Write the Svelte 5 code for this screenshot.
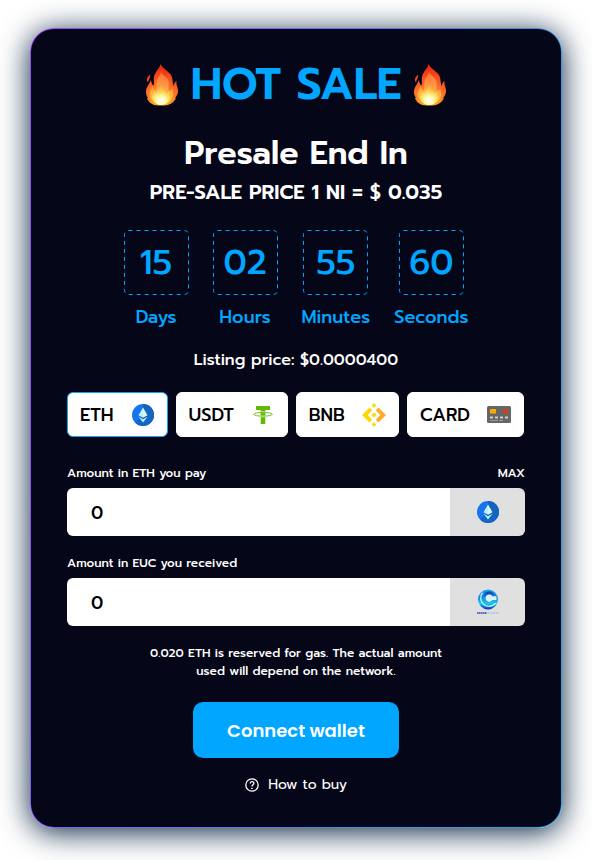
<script>
  const countdown = [
    { value: '15', label: 'Days' },
    { value: '02', label: 'Hours' },
    { value: '55', label: 'Minutes' },
    { value: '60', label: 'Seconds' }
  ];
  const methods = ['ETH', 'USDT', 'BNB', 'CARD'];
  let selected = $state('ETH');
  let pay = $state('0');
  let receive = $state('0');
</script>

{#snippet flame(id)}
  <svg class="flame" viewBox="0 0 34 42" aria-hidden="true">
    <defs>
      <radialGradient id="{id}-outer" cx="16" cy="37" r="34" gradientUnits="userSpaceOnUse">
        <stop offset="0" stop-color="#ffd21c" />
        <stop offset=".4" stop-color="#ff7d2b" />
        <stop offset=".72" stop-color="#f74b20" />
        <stop offset="1" stop-color="#e62b12" />
      </radialGradient>
      <linearGradient id="{id}-mid" x1="16" y1="6" x2="16" y2="38" gradientUnits="userSpaceOnUse">
        <stop offset="0" stop-color="#ff7a3d" />
        <stop offset=".5" stop-color="#ffa24a" />
        <stop offset="1" stop-color="#ffdc35" />
      </linearGradient>
      <radialGradient id="{id}-core" cx="16" cy="37" r="15" gradientUnits="userSpaceOnUse">
        <stop offset="0" stop-color="#ffffff" />
        <stop offset=".3" stop-color="#fffbb0" />
        <stop offset="1" stop-color="#ffd42a" stop-opacity="0.2" />
      </radialGradient>
    </defs>
    <path fill="url(#{id}-outer)" d="M15.5 0C15 4 10 7.500 9 13c-.5 3 .3 6-.4 8.500C7 21 6.500 17.500 5.500 16 5 20 1.500 22 1 27c-.2 3 .6 5 2 7L2 34c1 4 5.500 7.500 11.500 7.500h6c6-.5 10-3.500 11.500-7.500l-1 .3c2-2.300 3.500-5.500 3-8.500-.3-3-2-5-1.500-9-2 1.500-2.300 3.500-3 5.500C27.500 19 28 16 26.500 12 25 8 18.500 5.500 15.500 0Z" />
    <path fill="#f0471f" d="M5 10.500C4 12 1.500 13.500 2 16.500c.1 1 .6 1.500 1.200 1.500.2-2.500 2.500-4 1.800-7.500Z" />
    <path fill="url(#{id}-mid)" opacity=".8" d="M16 8c-.5 4-4 6-4.500 10-.3 3 .5 6-.8 8C9 26 8 24 7 22.500 6.500 26 4 28 5 32c1.500 5 6 8 11.500 8S27 37 28 32c.6-3-.5-5-.7-7.500-1 1.500-1.800 2.500-3.300 2.500-1.500-3 .5-6-.5-10C22.500 13 17.500 12 16 8Z" />
    <path fill="url(#{id}-core)" d="M15.500 21c-1 4-3.500 5-4.500 8-1-.5-1.500-1.500-2-2.500-.5 3-2.500 4.500-1.500 8C8.500 38.500 12 41 16 41s8-2 9-6.500c.6-3-1-4.500-1-7.500-1 1-1.500 2-2.500 2.500C21 25.500 17 25 15.500 21Z" />
  </svg>
{/snippet}

{#snippet ethIcon()}
  <svg width="22" height="22" viewBox="0 0 22 22" aria-hidden="true">
    <circle cx="11" cy="11" r="11" fill="#1675ec" />
    <path d="M11 0a11 11 0 0 1 7.800 18.800L11 11Z" fill="#1565bd" />
    <path d="M18.800 18.800A11 11 0 0 1 3.200 18.800L11 11Z" fill="#1565c8" />
    <path d="M11 3.500 6.500 11.200 11 13.800Z" fill="#b9f1ff" />
    <path d="M11 3.500v10.300l4.500-2.600Z" fill="#d5f5f7" />
    <path d="M6.500 12.700 11 15.300l4.500-2.600L11 18.600Z" fill="#b9f1f4" />
  </svg>
{/snippet}

{#snippet methodIcon(name)}
  {#if name === 'ETH'}
    {@render ethIcon()}
  {:else if name === 'USDT'}
    <svg width="20" height="18" viewBox="0 0 20 18" aria-hidden="true">
      <path d="M3 0h14v4h-4.700v14H7.700V4H3Z" fill="#61b900" />
      <ellipse cx="10" cy="8.300" rx="9.300" ry="1.900" fill="none" stroke="#fff" stroke-width="1.900" />
      <ellipse cx="10" cy="8.300" rx="9.300" ry="1.900" fill="none" stroke="#72bf1c" stroke-width="1" />
      <path d="M7.700 7.200h4.600v2.200H7.700z" fill="#61b900" />
    </svg>
  {:else if name === 'BNB'}
    <svg width="24" height="24" viewBox="0 0 24 24" aria-hidden="true">
      <path d="M7.500 4.500 10.200 7.200 5.800 12l4.400 4.800-2.700 2.700L0 12Z" fill="#ffd600" />
      <path d="M16.500 4.500 13.800 7.200l4.400 4.800-4.400 4.800 2.700 2.700L24 12Z" fill="#ffab30" />
      <path d="M12 0 9.500 2.500 12 5Zm0 9.200L9.200 12l2.800 2.800Zm0 9.800-2.500 2.500L12 24Z" fill="#fbdf24" />
      <path d="m12 0 2.500 2.500L12 5Zm0 9.200 2.800 2.800-2.800 2.800Zm0 9.800 2.500 2.500L12 24Z" fill="#dfe823" />
    </svg>
  {:else}
    <svg width="24" height="17" viewBox="0 0 24 17" aria-hidden="true">
      <rect width="24" height="17" rx="1.500" fill="#666" />
      <rect x="3" y="3" width="6" height="4.500" rx=".5" fill="#ffb300" />
      <path d="M5 3v3h4" fill="none" stroke="#db8509" stroke-width=".5" />
      <circle cx="18.500" cy="5.300" r="2.500" fill="#e03c14" />
      <path d="M3 11.500h3m2 0h3m2 0h3m2 0h3" stroke="#d0d0d0" stroke-width="2" />
      <path d="M3 14.500h8m1 0h4" stroke="#aaa" stroke-width=".8" />
    </svg>
  {/if}
{/snippet}

<main>
  <section class="card">
    <h1>{@render flame('left')}<span>HOT SALE</span>{@render flame('right')}</h1>
    <h2>Presale End In</h2>
    <p class="price">PRE-SALE PRICE 1 NI = $ 0.035</p>

    <div class="countdown">
      {#each countdown as unit}
        <div class="unit">
          <div class="box">
            <svg class="outline" aria-hidden="true">
              <rect class="dashes" x="0.5" y="0.5" rx="4" />
            </svg>
            <span>{unit.value}</span>
          </div>
          <span class="unit-label">{unit.label}</span>
        </div>
      {/each}
    </div>

    <p class="listing">Listing price: $0.0000400</p>

    <div class="methods">
      {#each methods as name}
        <button
          type="button"
          class="method"
          class:active={selected === name}
          aria-pressed={selected === name}
          onclick={() => (selected = name)}
        >
          <span>{name}</span>
          <span class="method-icon">{@render methodIcon(name)}</span>
        </button>
      {/each}
    </div>

    <div class="field">
      <div class="field-head">
        <label for="pay">Amount in ETH you pay</label>
        <button type="button" class="max">MAX</button>
      </div>
      <div class="control">
        <input id="pay" type="text" inputmode="decimal" bind:value={pay} />
        <div class="token">{@render ethIcon()}</div>
      </div>
    </div>

    <div class="field">
      <div class="field-head">
        <label for="receive">Amount in EUC you received</label>
      </div>
      <div class="control">
        <input id="receive" type="text" inputmode="decimal" bind:value={receive} />
        <div class="token">
          <svg width="24" height="26" viewBox="0 0 24 26" aria-hidden="true">
            <defs>
              <linearGradient id="coin" x1="0" y1="0" x2="0" y2="1">
                <stop offset="0" stop-color="#1aa5e4" />
                <stop offset=".4" stop-color="#1a7fdc" />
                <stop offset=".7" stop-color="#16d0ea" />
                <stop offset="1" stop-color="#1521b0" />
              </linearGradient>
              <linearGradient id="ring" x1="0" y1="0" x2="0" y2="1">
                <stop offset="0" stop-color="#1431b8" />
                <stop offset=".5" stop-color="#149ce0" />
                <stop offset="1" stop-color="#22c7ee" />
              </linearGradient>
            </defs>
            <circle cx="12" cy="10.500" r="10" fill="url(#coin)" />
            <path d="M6.500 3.800a8.300 8.300 0 0 0 13 10.400" fill="none" stroke="#b5f3fa" stroke-width="1.400" />
            <circle cx="13" cy="9" r="6.500" fill="url(#ring)" />
            <path d="M20.500 7.300h-4.200a3.600 3.600 0 1 0 0 3.600h4.200" fill="#e0f1f5" />
            <path d="M1 24h10" stroke="#2848b8" stroke-width="1.600" stroke-dasharray="1.500 .4" />
            <path d="M11.500 24H23" stroke="#88bad6" stroke-width="1.200" stroke-dasharray="1.500 .5" />
          </svg>
        </div>
      </div>
    </div>

    <p class="note">0.020 ETH is reserved for gas. The actual amount used will depend on the network.</p>
    <button type="button" class="connect">Connect wallet</button>
    <a class="help" href="#how-to-buy">
      <svg width="14" height="14" viewBox="0 0 14 14" fill="none" stroke="currentColor" aria-hidden="true">
        <circle cx="7" cy="7" r="6.200" stroke-width="1.300" />
        <path d="M5.200 5.500c0-2.400 3.700-2.400 3.700-.2C8.900 6.800 7 6.900 7 8.400" stroke-width="1.300" />
        <path d="M7 9.700v1.300" stroke-width="1.400" />
      </svg>
      <span>How to buy</span>
    </a>
  </section>
</main>

<style>
  :global(body) {
    background: #fff;
  }
  main {
    padding: 28px 30px 32px;
    font-family: Prompt, Inter, 'Liberation Sans', sans-serif;
    color: #fff;
  }
  main, main * {
    box-sizing: border-box;
  }
  h1, h2, p {
    margin: 0;
  }
  button, input {
    font: inherit;
    border: 0;
  }
  button {
    cursor: pointer;
  }
  .card {
    display: flex;
    flex-direction: column;
    align-items: center;
    max-width: 532px;
    margin: 0 auto;
    padding: 30px 36px 32px;
    border: 1px solid transparent;
    border-radius: 24px;
    background:
      linear-gradient(#050618, #050618) padding-box,
      linear-gradient(100deg, #9b48f5, #5f78ea 50%, #2fa5dc) border-box;
    box-shadow: 0 4px 30px #04203f;
  }
  h1 {
    display: flex;
    align-items: center;
    gap: 12px;
    font-size: 44px;
    line-height: 52px;
    font-weight: 600;
    color: #00a6ff;
  }
  .flame {
    width: 34px;
    height: 42px;
  }
  h2 {
    margin-top: 23px;
    font-size: 32px;
    line-height: 40px;
    font-weight: 600;
  }
  .price {
    margin-top: 6px;
    font-size: 20px;
    line-height: 24px;
    font-weight: 600;
  }
  .countdown {
    display: flex;
    gap: 24px;
    margin-top: 26px;
    color: #00a6ff;
  }
  .unit {
    display: flex;
    flex-direction: column;
    align-items: center;
    gap: 10px;
  }
  .box {
    position: relative;
    display: grid;
    place-items: center;
    width: 65px;
    height: 65px;
    font-size: 34px;
    font-weight: 500;
  }
  .outline {
    position: absolute;
    inset: 0;
    width: 100%;
    height: 100%;
  }
  .dashes {
    width: 64px;
    height: 64px;
    fill: none;
    stroke: #00a6ff;
    stroke-width: 1px;
    stroke-dasharray: 4 4;
  }
  .unit-label {
    font-size: 18px;
    line-height: 24px;
    font-weight: 500;
  }
  .listing {
    margin-top: 19px;
    font-size: 16px;
    line-height: 24px;
    font-weight: 500;
  }
  .methods {
    display: flex;
    flex-wrap: wrap;
    gap: 8px;
    width: 100%;
    margin-top: 20px;
  }
  .method {
    display: flex;
    align-items: center;
    gap: 17px;
    height: 45px;
    padding: 0 12px;
    border: 1px solid #fff;
    border-radius: 6px;
    background: #fff;
    color: #000;
    font-size: 18px;
    font-weight: 500;
  }
  .method-icon {
    display: grid;
    place-items: center;
    width: 24px;
  }
  .active {
    border-color: #13a5e8;
  }
  .field {
    width: 100%;
    margin-top: 26px;
  }
  .field + .field {
    margin-top: 17px;
  }
  .field-head {
    display: flex;
    align-items: center;
    justify-content: space-between;
    height: 20px;
    font-size: 12px;
    line-height: 20px;
    font-weight: 500;
  }
  .max {
    padding: 0;
    background: none;
    color: #fff;
  }
  .control {
    display: flex;
    height: 48px;
    margin-top: 5px;
    border-radius: 6px;
    overflow: hidden;
  }
  input {
    flex: 1;
    min-width: 0;
    padding: 2px 24px 0;
    background: #fff;
    color: #000;
    font-size: 18px;
    font-weight: 500;
  }
  .token {
    display: grid;
    place-items: center;
    width: 75px;
    background: #e0e0e0;
  }
  .note {
    max-width: 310px;
    margin-top: 18px;
    font-size: 12px;
    line-height: 18px;
    font-weight: 500;
    text-align: center;
  }
  .connect {
    height: 56px;
    margin-top: 22px;
    padding: 0 34px;
    border-radius: 10px;
    background: #00a6ff;
    color: #fff;
    font-family: Poppins, Inter, 'Liberation Sans', sans-serif;
    font-size: 18px;
    font-weight: 600;
  }
  .help {
    display: flex;
    align-items: center;
    gap: 9px;
    margin-top: 17px;
    color: #fff;
    font-size: 14px;
    line-height: 20px;
    text-decoration: none;
  }
</style>
